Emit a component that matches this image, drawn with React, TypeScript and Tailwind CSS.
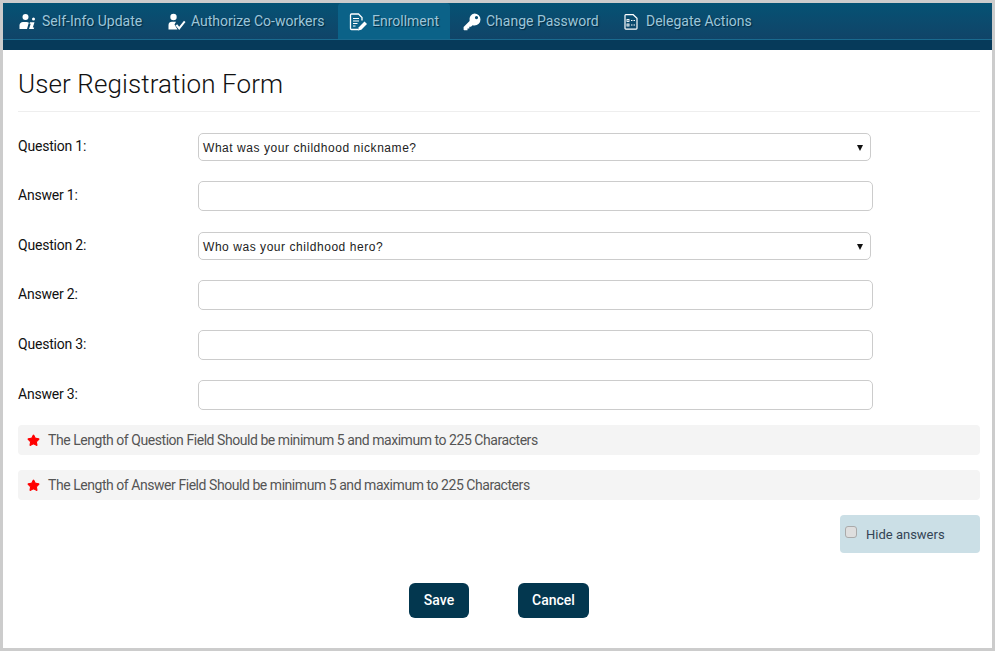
import React from "react";
import { Star } from "lucide-react";

const SelfInfoIcon = () => (
  <svg width="18" height="18" viewBox="0 0 18 18" fill="white">
    <circle cx="6.5" cy="4" r="3" />
    <path d="M0.5 16v-3.5C0.5 10.5 2 9 4 9h3.500c1 0 1.800.3 2.300.8L8 16z" />
    <circle cx="14.5" cy="6" r="1.500" />
    <path d="M11 9.200h4.500l-1.700 5.300h1.400l-.5 1.600H10l1.700-5.300h-1.200z" />
  </svg>
);

const AuthorizeIcon = () => (
  <svg width="18" height="18" viewBox="0 0 18 18" fill="white">
    <circle cx="5.500" cy="4" r="3.200" />
    <path d="M0.500 16.500v-4.500C.5 10 2 8.800 4 8.800h4L6.500 11.500l3 5z" />
    <path d="M7.500 12.500l1.700-1.300 2 2.600 4.800-6 1.500 1.200-6.300 8z" />
  </svg>
);

const EnrollIcon = () => (
  <svg width="18" height="18" viewBox="0 0 18 18" fill="none" stroke="white" strokeWidth="1.300">
    <path d="M9.500 16.500H2.500c-.6 0-1-.4-1-1V2c0-.6.4-1 1-1h7l3.500 3.500v3" />
    <path d="M4 5.500h6M4 8h6M4 10.500h4.500M4 13h2.500" strokeWidth="1.100" />
    <path d="M9 17.500l.8-3.300 5.700-5.700 2.500 2.500-5.700 5.700z" fill="white" stroke="none" />
  </svg>
);

const KeyIcon = () => (
  <svg width="18" height="18" viewBox="0 0 18 18" fill="white">
    <path
      fillRule="evenodd"
      d="M11.500 0.500a6 6 0 0 1 0 12c-.7 0-1.300-.1-1.900-.3L8 13.800H6.300v1.700H4.500v1.800H1.200L0.600 16.700v-2.800l6-6a6 6 0 0 1 4.900-7.400zM13.500 3a1.600 1.600 0 1 0 0 3.200 1.600 1.600 0 0 0 0-3.200z"
    />
  </svg>
);

const DelegateIcon = () => (
  <svg width="14" height="16" viewBox="0 0 14 16" fill="none" stroke="white" strokeWidth="1.200">
    <path d="M1 1.500C1 1 1.300.7 1.800.7h7.400L13 4.200v10.100c0 .5-.3.8-.8.8H1.800c-.5 0-.8-.3-.8-.8z" />
    <rect x="3" y="5.500" width="2" height="2" strokeWidth="0.900" />
    <rect x="3" y="10" width="2" height="2" strokeWidth="0.900" />
    <path d="M7 6.500h1.500M9.500 6.500H11M7 11h1.500M9.500 11H11" strokeWidth="1" />
  </svg>
);

const navItems = [
  { label: "Self-Info Update", icon: <SelfInfoIcon />, cls: "w-[149px] pl-[15px] gap-[5px]" },
  { label: "Authorize Co-workers", icon: <AuthorizeIcon />, cls: "w-[185px] pl-[15px] gap-[5px]" },
  { label: "Enrollment", icon: <EnrollIcon />, cls: "w-[112px] pl-[11px] gap-[5px] bg-[#0b6288] rounded-t-[4px]" },
  { label: "Change Password", icon: <KeyIcon />, cls: "w-[164px] pl-[13px] gap-[5px]" },
  { label: "Delegate Actions", icon: <DelegateIcon />, cls: "w-[150px] pl-[8px] gap-[6px]" },
];

function SelectRow({ label, value, mt }: { label: string; value: string; mt: string }) {
  return (
    <div className={`flex ${mt}`}>
      <label className="w-[180px] text-[14px] leading-[26px] text-[#111] -tracking-[0.2px]">{label}</label>
      <div className="w-[673px] h-[28px] border border-[#ccc] rounded-[5px] bg-white flex items-center justify-between pl-[4px] pr-[7px] pt-[1px] font-['Liberation_Sans',sans-serif] text-[12px] tracking-[0.55px] text-[#222]">
        <span>{value}</span>
        <span className="w-0 h-0 border-x-[3px] border-x-transparent border-t-[6px] border-t-[#111]" />
      </div>
    </div>
  );
}

function InputRow({ label, mt }: { label: string; mt: string }) {
  return (
    <div className={`flex ${mt}`}>
      <label className="w-[180px] text-[14px] leading-[28px] text-[#111] -tracking-[0.2px]">{label}</label>
      <input type="text" className="w-[675px] h-[30px] border border-[#ccc] rounded-[5px] bg-white" />
    </div>
  );
}

function Note({ text, mt }: { text: string; mt: string }) {
  return (
    <div className={`h-[30px] rounded-[4px] bg-[#f4f4f4] flex items-center pl-[9px] ${mt}`}>
      <Star size={13} fill="#ff0000" stroke="#ff0000" className="mr-[8px]" />
      <span className="text-[14px] text-[#555] -tracking-[0.45px]">{text}</span>
    </div>
  );
}

export default function App() {
  return (
    <div className="w-[995px] h-[651px] border-[3px] border-[#cccccc] bg-white font-['Roboto',sans-serif] overflow-hidden">
      <nav className="h-[47px] bg-[#063a5a] flex flex-col">
        <div className="h-[36px] border-b border-[#1a6a8f] box-content bg-gradient-to-b from-[#045274] to-[#104468] flex">
          <div className="w-[1px]" />
          {navItems.map((item) => (
            <div
              key={item.label}
              className={`${item.cls} flex items-center pt-[1px] text-[14px] text-[#9cc6da] [text-shadow:1px_1px_1px_#02283f]`}
            >
              <span className="w-[18px] flex justify-center">{item.icon}</span>
              <span>{item.label}</span>
            </div>
          ))}
        </div>
      </nav>
      <main className="pl-[15px] pr-[12px]">
        <h1 className="mt-[14px] h-[48px] border-b border-[#eeeeee] text-[26px] tracking-[0.1px] font-light leading-[40px] text-[#111]">User Registration Form</h1>
        <SelectRow label="Question 1:" value="What was your childhood nickname?" mt="mt-[21px]" />
        <InputRow label="Answer 1:" mt="mt-[20px]" />
        <SelectRow label="Question 2:" value="Who was your childhood hero?" mt="mt-[21px]" />
        <InputRow label="Answer 2:" mt="mt-[20px]" />
        <InputRow label="Question 3:" mt="mt-[20px]" />
        <InputRow label="Answer 3:" mt="mt-[20px]" />
        <Note text="The Length of Question Field Should be minimum 5 and maximum to 225 Characters" mt="mt-[15px]" />
        <Note text="The Length of Answer Field Should be minimum 5 and maximum to 225 Characters" mt="mt-[15px]" />
        <div className="flex justify-end mt-[15px]">
          <label className="w-[140px] h-[38px] rounded-[4px] bg-[#cbdfe6] flex items-start pl-[5px] pt-[10px] text-[13px] text-[#334455]">
            <input type="checkbox" className="appearance-none w-[12px] h-[12px] mr-[9px] mt-[1px] rounded-[3px] bg-[#dedede] border border-[#aaaaaa]" />
            <span>Hide answers</span>
          </label>
        </div>
        <div className="flex mt-[30px] ml-[391px] gap-[49px]">
          <button className="w-[60px] h-[35px] rounded-[6px] bg-[#03374f] text-white text-[14px] font-medium">Save</button>
          <button className="w-[71px] h-[35px] rounded-[6px] bg-[#03374f] text-white text-[14px] font-medium">Cancel</button>
        </div>
      </main>
    </div>
  );
}
